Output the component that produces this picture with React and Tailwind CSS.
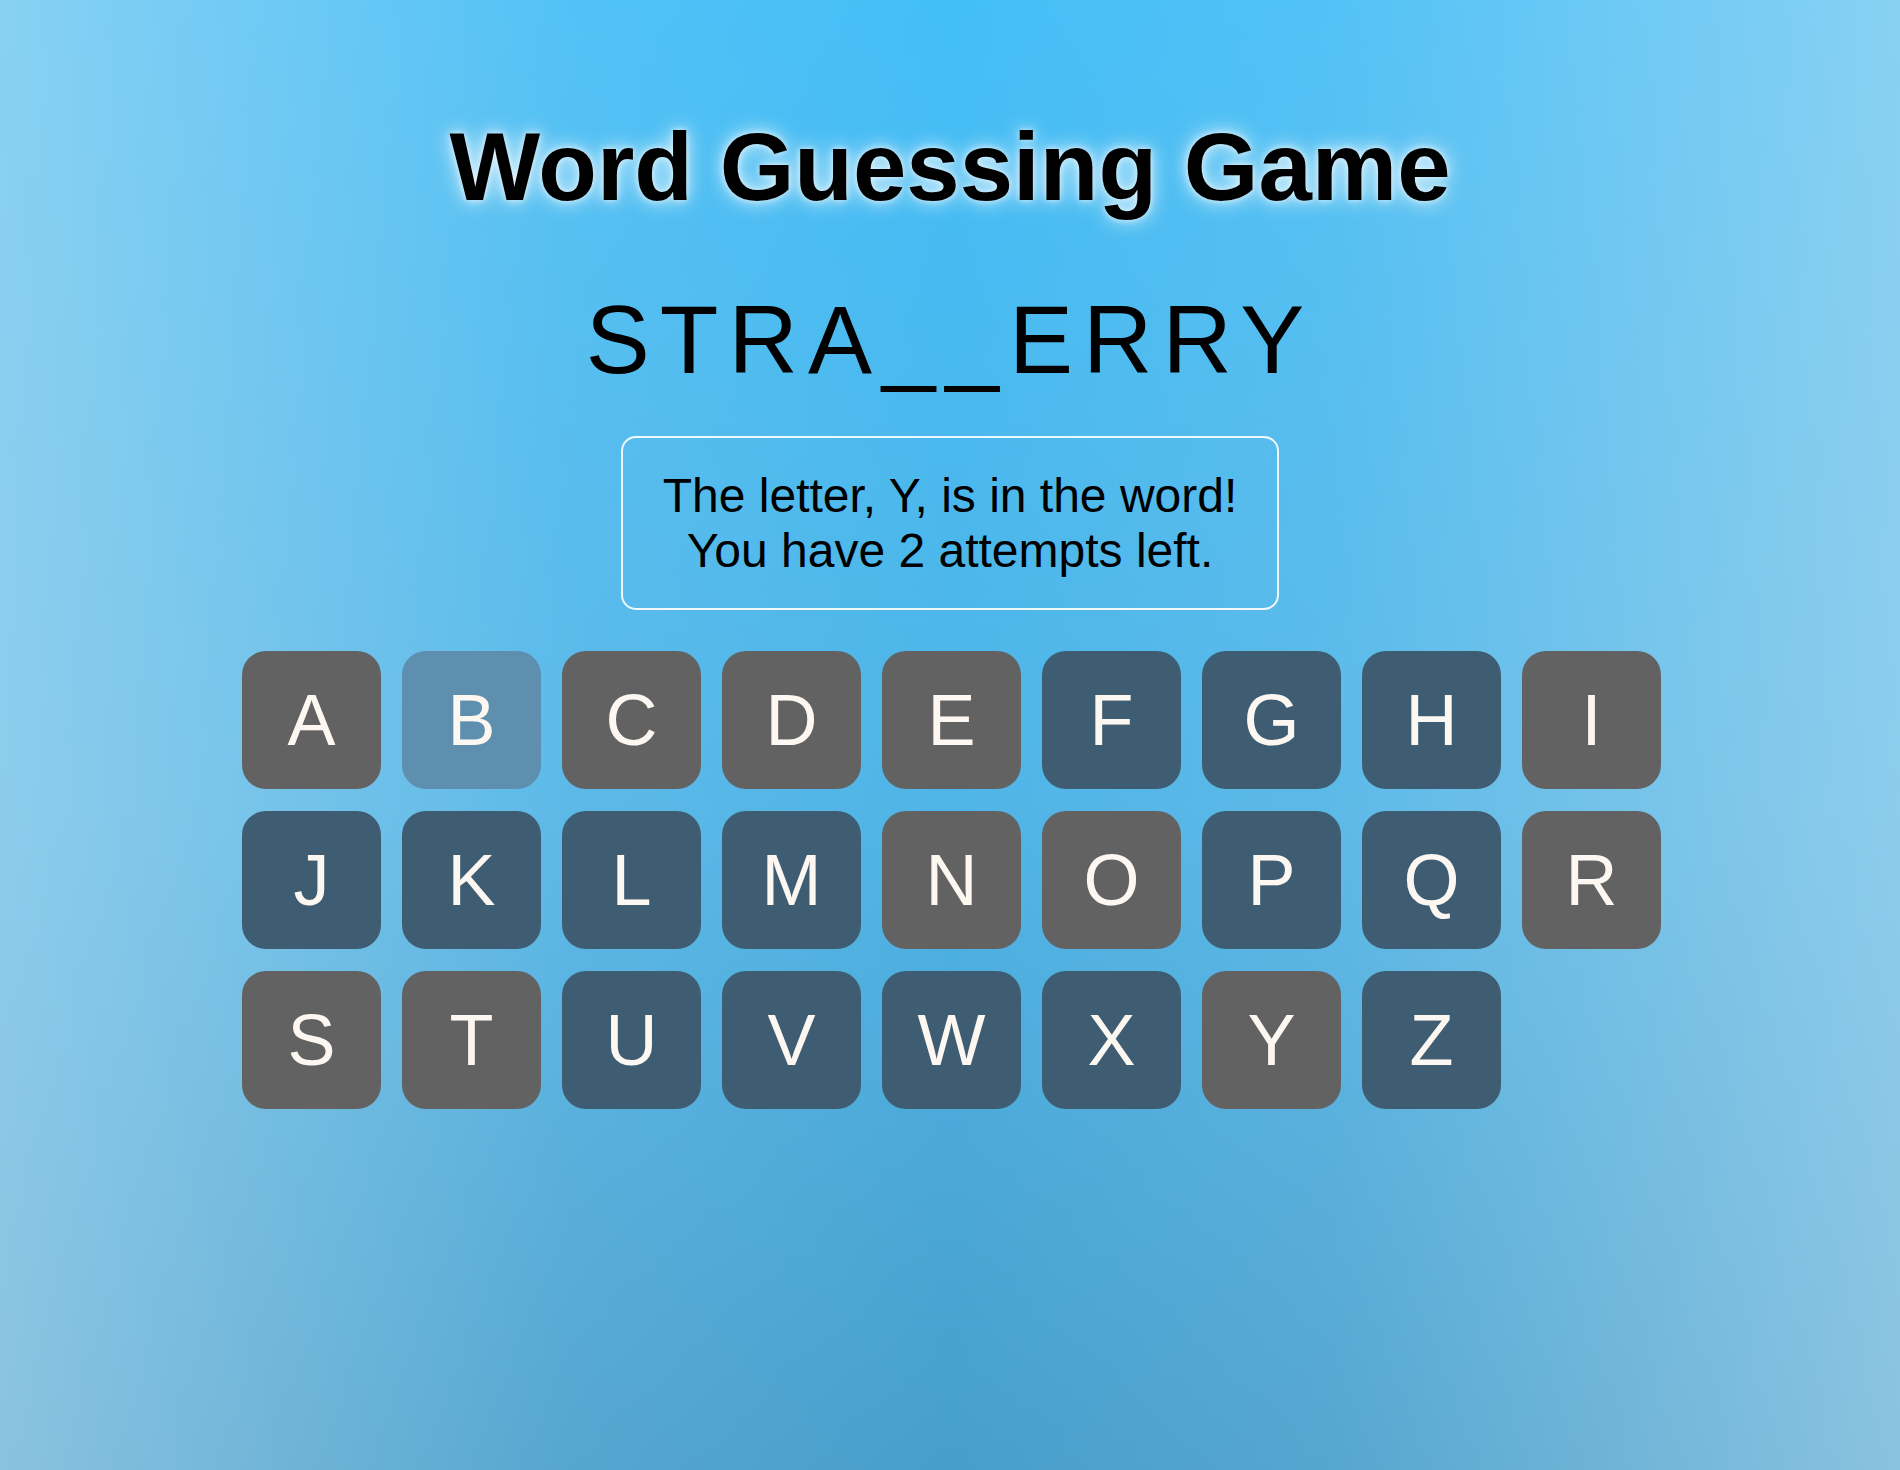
import React from 'react';

const LETTERS = 'ABCDEFGHIJKLMNOPQRSTUVWXYZ'.split('');

// guessed letters show grey, hovered key is lighter, the rest are dark blue
const GUESSED = ['A', 'C', 'D', 'E', 'I', 'N', 'O', 'R', 'S', 'T', 'Y'];
const HOVERED = 'B';

const keyClass = (letter) => {
  if (letter === HOVERED) return 'bg-[#5e8fae]';
  if (GUESSED.includes(letter)) return 'bg-[#626262]';
  return 'bg-[#3e5d73]';
};

const App = () => {
  return (
    <div
      className="min-h-[1470px] w-full flex flex-col items-center font-['Liberation_Sans',Arial,sans-serif] bg-[linear-gradient(to_right,rgba(192,224,240,0.55)_0%,rgba(192,224,240,0.12)_30%,rgba(192,224,240,0)_50%,rgba(192,224,240,0.12)_70%,rgba(192,224,240,0.55)_100%),linear-gradient(to_bottom,#43bef7_0%,#4fb4e6_55%,#479ecb_100%)]"
    >
      {/* Title */}
      <h1 className="mt-[119px] text-[96px] leading-none font-bold text-black [text-shadow:0_0_20px_rgba(255,255,255,0.9),0_0_6px_rgba(255,255,255,0.7)]">
        Word Guessing Game
      </h1>

      {/* Masked word */}
      <div className="mt-[77px] text-[96px] leading-none tracking-[0.105em] text-black">
        STRA__ERRY
      </div>

      {/* Status message */}
      <div className="mt-[48px] border-2 border-white/90 rounded-[15px] px-10 py-[30px] text-center text-[48px] leading-[55px] text-black">
        <p>The letter, Y, is in the word!</p>
        <p>You have 2 attempts left.</p>
      </div>

      {/* Keyboard */}
      <div className="mt-[41px] ml-[3px] grid grid-cols-[repeat(9,139px)] gap-x-[21px] gap-y-[22px]">
        {LETTERS.map((letter) => (
          <button
            key={letter}
            type="button"
            className={`w-[139px] h-[138px] rounded-[24px] flex items-center justify-center text-[72px] leading-none text-[#fdf7f2] ${keyClass(letter)}`}
          >
            {letter}
          </button>
        ))}
      </div>
    </div>
  );
};

export default App;
